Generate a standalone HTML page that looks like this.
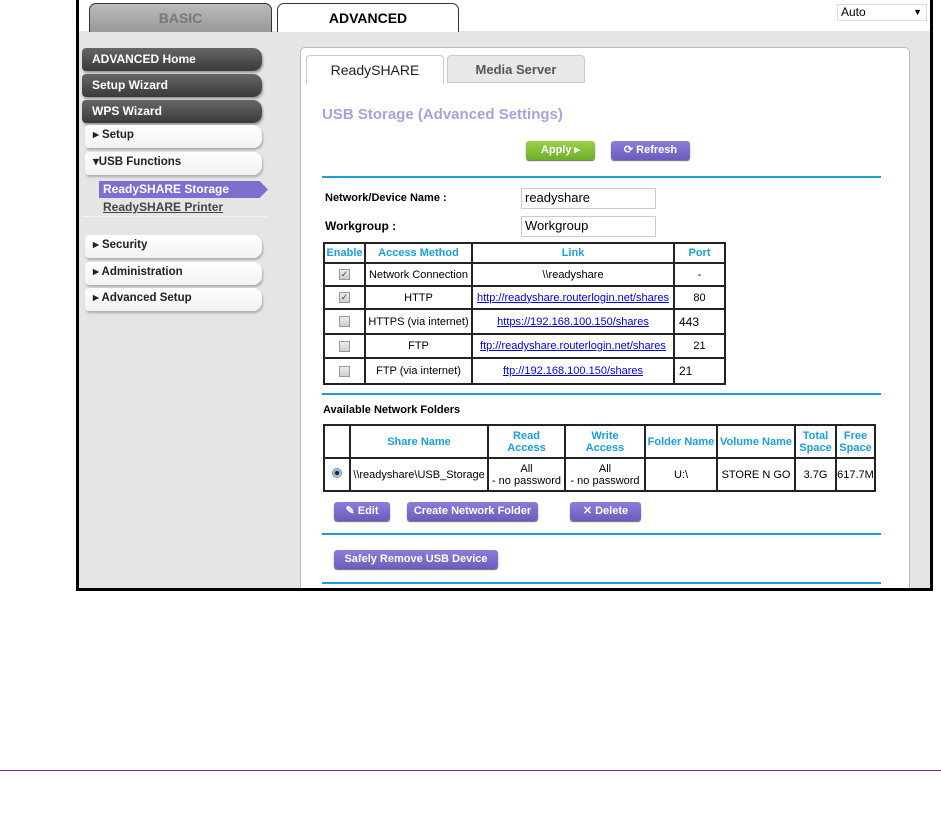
<!DOCTYPE html>
<html><head><meta charset="utf-8"><style>
*{box-sizing:border-box;margin:0;padding:0}
body{width:941px;height:838px;background:#fff;position:relative;font-family:"Liberation Sans",Arial,sans-serif;overflow:hidden}
.a{position:absolute}
#frame{left:76px;top:0;width:857px;height:591px;border:3px solid #000;border-top:none;background:#e5e5e5;overflow:hidden}
.top{left:0;top:0;width:851px;height:31px;background:#fff}
.tab{top:3px;height:29px;border:1px solid #333;border-bottom:none;border-radius:7px 7px 0 0;text-align:center;font-weight:bold;font-size:14px;line-height:28px}
.dk{left:3px;width:180px;height:23px;border-radius:4px 9px 9px 4px;background:linear-gradient(#666,#3a3a3a);color:#fff;font-weight:bold;font-size:12px;line-height:22px;padding-left:10px;box-shadow:1px 2px 2px #999}
.wt{left:6px;width:177px;height:23px;border-radius:4px 9px 9px 4px;background:linear-gradient(#fff,#f2f2f2);color:#222;font-weight:bold;font-size:11.5px;line-height:21px;padding-left:8px;box-shadow:1px 2px 2px #aaa}
#panel{left:221px;top:47px;width:610px;height:560px;background:#fff;border:1px solid #bbb;border-radius:5px}
.line{height:2px;background:#1a9fd9}
table{border-collapse:collapse;position:absolute;font-size:11px}
td{border:2px solid #222;text-align:center;padding:0}
th{border:2px solid #222;color:#1a9fd9;font-size:11px;font-weight:bold;padding:0}
a{color:#00e;text-decoration:underline}
.cb{display:inline-block;width:11px;height:11px;border:1px solid #999;background:linear-gradient(#eee,#ccc);font-size:9px;line-height:9px;color:#346;vertical-align:middle}
.inp{border:1px solid #ccc;background:#fff;font-size:13px;padding-left:3px;line-height:18px}
.btn{height:19px;border-radius:3px;color:#fff;font-weight:bold;font-size:11px;text-align:center;line-height:18px;background:linear-gradient(#8a7fd6,#6a5cbf);box-shadow:0 1px 1px #666}
</style></head><body>
<div id="frame" class="a">
 <div class="a top"></div>
 <div class="a tab" style="left:10px;width:183px;background:linear-gradient(#bbb,#999);color:#777">BASIC</div>
 <div class="a tab" style="left:198px;width:182px;background:#fff;color:#000">ADVANCED</div>
 <div class="a inp" style="left:758px;top:4px;width:90px;height:17px;font-size:12px;line-height:15px;border-color:#ddd">Auto<span style="position:absolute;right:4px;font-size:9px">▼</span></div>
 <div class="a dk" style="top:48px">ADVANCED Home</div>
 <div class="a dk" style="top:74px">Setup Wizard</div>
 <div class="a dk" style="top:100px">WPS Wizard</div>
 <div class="a wt" style="top:125px">▸ Setup</div>
 <div class="a wt" style="top:152px">▾USB Functions</div>
 <div class="a" style="left:20px;top:181px;width:169px;height:17px;background:#7b6fd0;color:#fff;font-weight:bold;font-size:12px;line-height:16px;padding-left:4px;clip-path:polygon(0 0,95% 0,100% 50%,95% 100%,0 100%)">ReadySHARE Storage</div>
 <div class="a" style="left:24px;top:200px;font-size:12px;font-weight:bold;color:#444;text-decoration:underline">ReadySHARE Printer</div>
 <div class="a" style="left:3px;top:216px;width:185px;height:1px;background:#f4f4f4"></div>
 <div class="a wt" style="top:235px">▸ Security</div>
 <div class="a wt" style="top:262px">▸ Administration</div>
 <div class="a wt" style="top:288px">▸ Advanced Setup</div>
 <div id="panel" class="a"></div>
</div>
<div class="a" style="left:306px;top:55px;width:138px;height:29px;border:1px solid #ccc;border-bottom:none;border-radius:4px 4px 0 0;background:#fff;text-align:center;font-size:14px;line-height:28px;color:#222">ReadySHARE</div>
<div class="a" style="left:447px;top:55px;width:138px;height:28px;border:1px solid #ccc;border-radius:4px 4px 0 0;background:#e8e8e8;text-align:center;font-size:13px;font-weight:bold;line-height:27px;color:#555">Media Server</div>
<div class="a" style="left:322px;top:106px;font-size:15px;font-weight:bold;color:#a9a0de">USB Storage (Advanced Settings)</div>
<div class="a btn" style="left:526px;top:141px;width:69px;background:linear-gradient(#9ad04a,#6fae2a)">Apply ▸</div>
<div class="a btn" style="left:611px;top:141px;width:79px">⟳ Refresh</div>
<div class="a line" style="left:322px;top:176px;width:559px"></div>
<div class="a" style="left:325px;top:192px;font-size:11px;font-weight:bold">Network/Device Name :</div>
<div class="a inp" style="left:521px;top:188px;width:135px;height:21px">readyshare</div>
<div class="a" style="left:325px;top:219px;font-size:12px;font-weight:bold">Workgroup :</div>
<div class="a inp" style="left:521px;top:216px;width:135px;height:21px">Workgroup</div>
<table style="left:323px;top:242px;width:403px">
<tr style="height:20px"><th style="width:41px">Enable</th><th style="width:107px">Access Method</th><th style="width:202px">Link</th><th>Port</th></tr>
<tr style="height:23px"><td><span class="cb">✓</span></td><td>Network Connection</td><td>\\readyshare</td><td>-</td></tr>
<tr style="height:23px"><td><span class="cb">✓</span></td><td>HTTP</td><td><a>http://readyshare.routerlogin.net/shares</a></td><td>80</td></tr>
<tr style="height:25px"><td><span class="cb"></span></td><td>HTTPS (via internet)</td><td><a>https://192.168.100.150/shares</a></td><td style="text-align:left;font-size:12px;padding-left:4px">443</td></tr>
<tr style="height:24px"><td><span class="cb"></span></td><td>FTP</td><td><a>ftp://readyshare.routerlogin.net/shares</a></td><td>21</td></tr>
<tr style="height:26px"><td><span class="cb"></span></td><td>FTP (via internet)</td><td><a>ftp://192.168.100.150/shares</a></td><td style="text-align:left;font-size:12px;padding-left:4px">21</td></tr>
</table>
<div class="a line" style="left:322px;top:393px;width:559px"></div>
<div class="a" style="left:323px;top:404px;font-size:11px;font-weight:bold">Available Network Folders</div>
<table style="left:323px;top:424px;width:553px">
<tr style="height:33px"><th style="width:26px"></th><th style="width:138px">Share Name</th><th style="width:77px">Read<br>Access</th><th style="width:80px">Write<br>Access</th><th style="width:72px">Folder Name</th><th style="width:78px">Volume Name</th><th style="width:41px">Total<br>Space</th><th>Free<br>Space</th></tr>
<tr style="height:33px"><td><span style="display:inline-block;width:10px;height:10px;border-radius:50%;background:radial-gradient(#124 30%,#6ad 40%,#ddd 70%);border:1px solid #888"></span></td><td>\\readyshare\USB_Storage</td><td>All<br>- no password</td><td>All<br>- no password</td><td>U:\</td><td>STORE N GO</td><td>3.7G</td><td>617.7M</td></tr>
</table>
<div class="a btn" style="left:334px;top:502px;width:56px">✎ Edit</div>
<div class="a btn" style="left:407px;top:502px;width:131px">Create Network Folder</div>
<div class="a btn" style="left:570px;top:502px;width:71px">✕ Delete</div>
<div class="a line" style="left:322px;top:533px;width:559px"></div>
<div class="a btn" style="left:334px;top:550px;width:164px">Safely Remove USB Device</div>
<div class="a line" style="left:322px;top:582px;width:559px"></div>
<div class="a" style="left:0;top:770px;width:941px;height:1px;background:#7030a0"></div>
</body></html>
